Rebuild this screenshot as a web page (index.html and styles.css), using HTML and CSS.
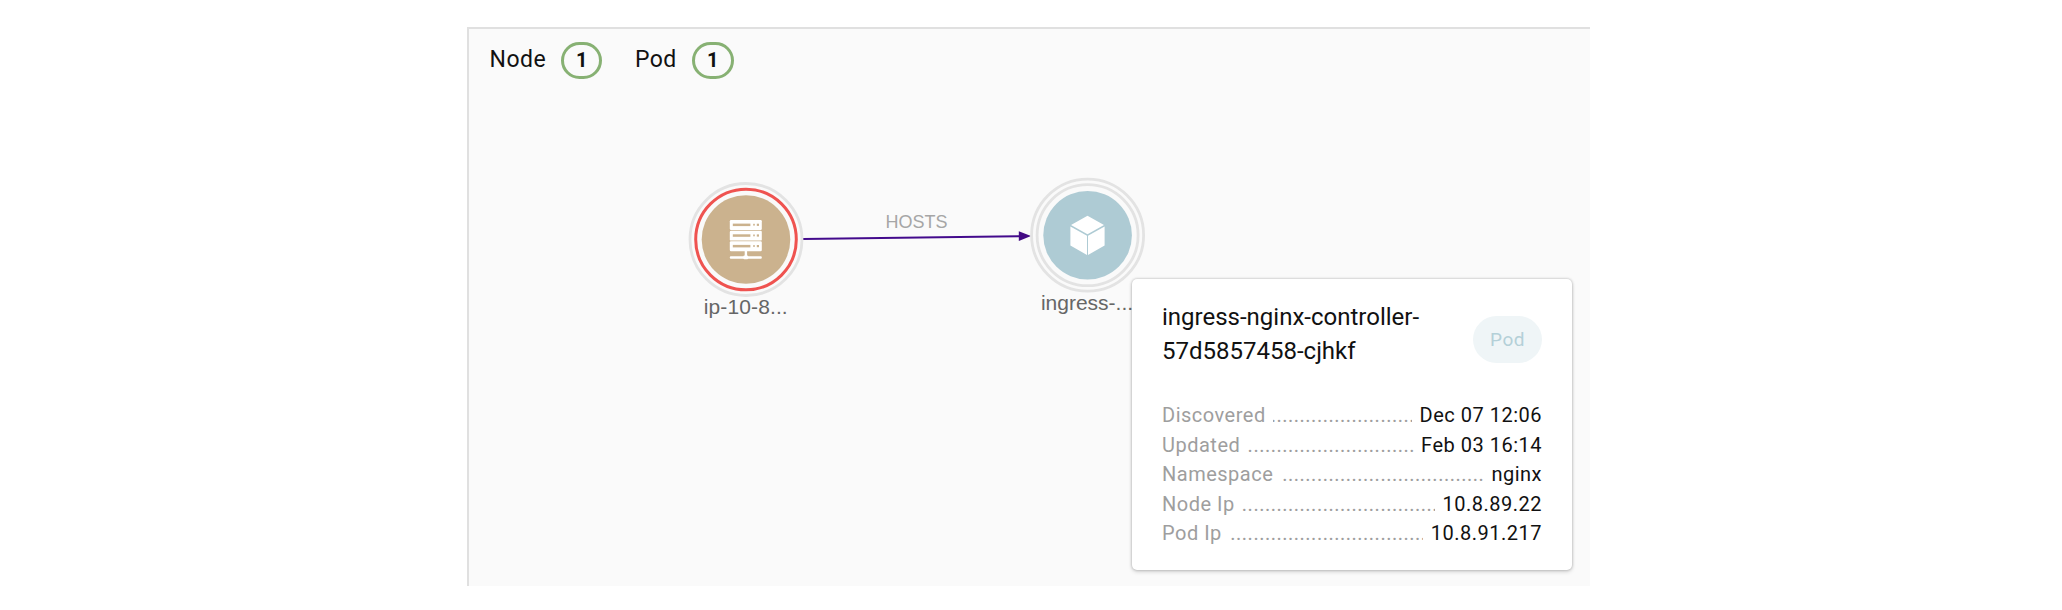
FILE: index.html
```html
<!DOCTYPE html>
<html lang="en">
<head>
<meta charset="utf-8">
<title>Topology</title>
<link rel="stylesheet" href="styles.css">
</head>
<body>
<main class="panel">
  <header class="legend">
    <div class="legend-item"><span>Node</span><span class="count">1</span></div>
    <div class="legend-item"><span>Pod</span><span class="count count-wide">1</span></div>
  </header>
  <svg class="graph" viewBox="467 27 1123 559" width="1123" height="559">
    <path d="M803 238.9L1020 236.3" stroke="#430a8c" stroke-width="2"/>
    <path d="M1018.8 231.3L1031 236L1018.8 241Z" fill="#430a84"/>
    <text class="edge-label" x="916.5" y="228.3">HOSTS</text>
    <g>
      <circle cx="746" cy="239.5" r="56" class="ring"/>
      <circle cx="746" cy="239.5" r="50.3" class="ring ring-alert"/>
      <circle cx="746" cy="239.5" r="44.3" fill="#cbb28e"/>
      <g fill="#fff">
        <rect x="729.8" y="220" width="32" height="9.9" rx="1.2"/>
        <rect x="729.8" y="230.7" width="32" height="9.9" rx="1.2"/>
        <rect x="729.8" y="241.3" width="32" height="9.9" rx="1.2"/>
        <rect x="744.7" y="250" width="2.4" height="7"/>
        <rect x="743.4" y="255.6" width="4.8" height="3.6" rx="1"/>
        <rect x="729.8" y="256.2" width="32" height="2.5" rx="1"/>
      </g>
      <g fill="#cbb28e">
        <rect x="732.8" y="223.6" width="17.6" height="2.5"/><rect x="753.2" y="223.8" width="1.6" height="1.8"/><rect x="756.8" y="223.7" width="2.2" height="2.2"/>
        <rect x="732.8" y="234.3" width="17.6" height="2.5"/><rect x="753.2" y="234.5" width="1.6" height="1.8"/><rect x="756.8" y="234.4" width="2.2" height="2.2"/>
        <rect x="732.8" y="244.9" width="17.6" height="2.5"/><rect x="753.2" y="245.1" width="1.6" height="1.8"/><rect x="756.8" y="245" width="2.2" height="2.2"/>
      </g>
      <text class="node-label" x="745.7" y="314" textLength="84">ip-10-8...</text>
    </g>
    <g>
      <circle cx="1087.6" cy="235.2" r="56" class="ring"/>
      <circle cx="1087.6" cy="235.2" r="50.5" class="ring"/>
      <circle cx="1087.6" cy="235.2" r="44.3" fill="#aecbd4"/>
      <path d="M1087.5 215.7L1104 225L1087.5 234.3L1071 225ZM1070.4 226.6L1087 235.8V254.9L1070.4 245.5ZM1104.6 226.6L1088 235.8V254.9L1104.6 245.5Z" fill="#fff"/>
      <text class="node-label" x="1087" y="309.5">ingress-...</text>
    </g>
  </svg>
  <section class="card">
    <div class="card-head">
      <h1 class="title">ingress-nginx-controller-<br>57d5857458-cjhkf</h1>
      <span class="tag">Pod</span>
    </div>
    <dl class="details">
      <div class="row"><dt>Discovered</dt><dd>Dec 07 12:06</dd></div>
      <div class="row"><dt>Updated</dt><dd>Feb 03 16:14</dd></div>
      <div class="row"><dt>Namespace</dt><dd>nginx</dd></div>
      <div class="row"><dt>Node Ip</dt><dd>10.8.89.22</dd></div>
      <div class="row"><dt>Pod Ip</dt><dd>10.8.91.217</dd></div>
    </dl>
  </section>
</main>
</body>
</html>
```
FILE: styles.css
```css
* { box-sizing: border-box; }
body {
  margin: 0;
  background: #fff;
  font-family: Roboto, sans-serif;
  color: #111;
}
.panel {
  position: relative;
  width: 1123px;
  height: 559px;
  margin: 27px 0 0 467px;
  background: #fafafa;
  border: solid #e0e0e0;
  border-width: 2px 0 0 2px;
}
.legend {
  position: absolute;
  top: 13px;
  left: 20.6px;
  display: flex;
  gap: 32.6px;
  font-size: 23px;
  letter-spacing: .5px;
}
.legend-item {
  display: flex;
  align-items: center;
  gap: 15px;
  height: 37px;
}
.legend-item > span:first-child { margin-top: -2px; }
.count {
  width: 41px;
  height: 37px;
  border: 3px solid #87b173;
  border-radius: 19px;
  font-size: 20px;
  font-weight: 700;
  line-height: 31px;
  letter-spacing: 0;
  text-align: center;
}
.count-wide { width: 42px; }
.graph {
  display: block;
  margin: -2px 0 0 -2px;
}
.ring { fill: none; stroke: #e3e3e3; stroke-width: 2.8; }
.ring-alert { stroke: #ef5350; stroke-width: 3; }
.node-label, .edge-label {
  font-family: "Liberation Sans", Arial, sans-serif;
  text-anchor: middle;
}
.node-label { font-size: 21px; fill: #666; }
.edge-label { font-size: 18px; fill: #a6a6a6; }
.card {
  position: absolute;
  left: 663px;
  top: 250px;
  width: 440px;
  height: 291px;
  padding: 22px 30px 0 30px;
  background: #fff;
  border-radius: 5px;
  box-shadow: 0 0 3px rgba(0, 0, 0, .28), 0 2px 4px rgba(0, 0, 0, .14);
}
.card-head {
  display: flex;
  justify-content: space-between;
  align-items: center;
}
.title {
  margin: 0;
  font-size: 24px;
  font-weight: 400;
  line-height: 33.6px;
  letter-spacing: 0;
}
.tag {
  width: 69px;
  height: 47px;
  margin-top: 10px;
  border-radius: 24px;
  background: #eff5f7;
  color: #b4d0d8;
  font-size: 19px;
  line-height: 47px;
  letter-spacing: .5px;
  text-align: center;
}
.details {
  margin: 33px 0 0;
  font-size: 20px;
  line-height: 29.5px;
  letter-spacing: .5px;
}
.row {
  position: relative;
  display: flex;
  justify-content: space-between;
  height: 29.5px;
  overflow: hidden;
}
.row::before {
  content: "..........................................................................";
  position: absolute;
  left: -1px;
  color: #9e9e9e;
  white-space: nowrap;
}
.row dt, .row dd {
  position: relative;
  margin: 0;
  background: #fff;
}
.row dt { color: #9e9e9e; padding-right: 7.5px; }
.row dd { padding-left: 7.5px; }
```
